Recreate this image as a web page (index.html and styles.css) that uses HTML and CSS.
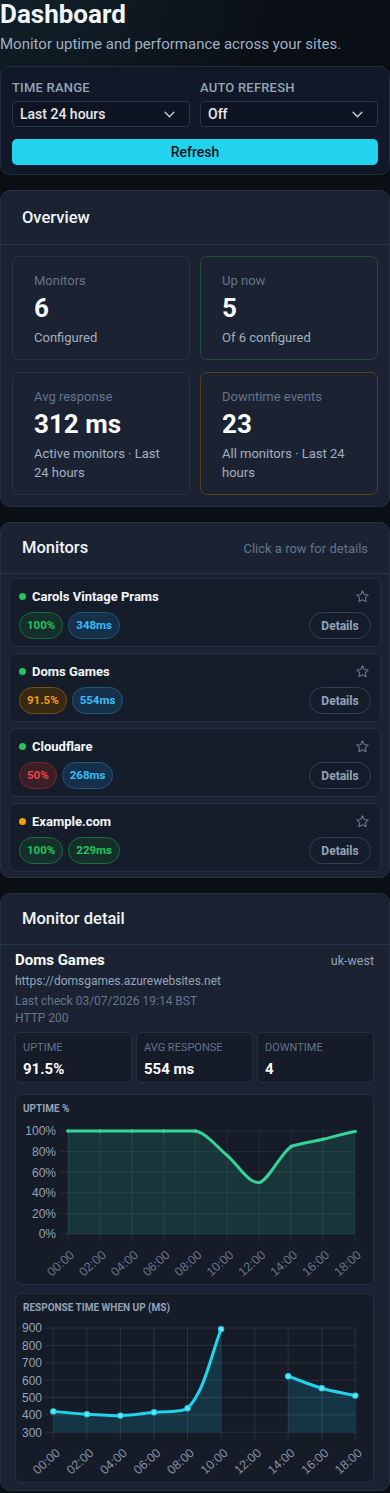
FILE: index.html
```html
<!DOCTYPE html>
<html lang="en">
<head>
<meta charset="utf-8">
<title>Dashboard</title>
<link rel="stylesheet" href="styles.css">
</head>
<body>
<main class="page">
  <header class="page-head">
    <h1 class="title">Dashboard</h1>
    <p class="subtitle">Monitor uptime and performance across your sites.</p>
  </header>

  <section class="controls">
    <div class="control-grid">
      <div class="field">
        <span class="field-label">Time range</span>
        <div class="select"><span>Last 24 hours</span><svg class="chev" viewBox="0 0 12 8" width="11" height="7"><path d="M1 1.5l5 5 5-5" fill="none" stroke="#cbd5e1" stroke-width="1.5" stroke-linecap="round" stroke-linejoin="round"/></svg></div>
      </div>
      <div class="field">
        <span class="field-label">Auto refresh</span>
        <div class="select"><span>Off</span><svg class="chev" viewBox="0 0 12 8" width="11" height="7"><path d="M1 1.5l5 5 5-5" fill="none" stroke="#cbd5e1" stroke-width="1.5" stroke-linecap="round" stroke-linejoin="round"/></svg></div>
      </div>
    </div>
    <button class="refresh" type="button">Refresh</button>
  </section>

  <section class="card">
    <div class="card-head card-head--tall"><h2 class="card-title">Overview</h2></div>
    <div class="stats">
      <div class="stat">
        <div class="stat-label">Monitors</div>
        <div class="stat-value">6</div>
        <div class="stat-sub">Configured</div>
      </div>
      <div class="stat stat--up">
        <div class="stat-label">Up now</div>
        <div class="stat-value">5</div>
        <div class="stat-sub">Of 6 configured</div>
      </div>
      <div class="stat">
        <div class="stat-label">Avg response</div>
        <div class="stat-value">312 ms</div>
        <div class="stat-sub">Active monitors · Last 24 hours</div>
      </div>
      <div class="stat stat--warn">
        <div class="stat-label">Downtime events</div>
        <div class="stat-value">23</div>
        <div class="stat-sub">All monitors · Last 24 hours</div>
      </div>
    </div>
  </section>

  <section class="card">
    <div class="card-head">
      <h2 class="card-title">Monitors</h2>
      <span class="card-hint">Click a row for details</span>
    </div>
    <div class="rows">
      <div class="row">
        <div class="row-top">
          <span class="dot dot--up"></span>
          <span class="row-name">Carols Vintage Prams</span>
          <svg class="star" viewBox="0 0 24 24" width="15" height="15"><path d="M12 2.8l2.8 5.9 6.4.8-4.7 4.4 1.2 6.4L12 17.2l-5.7 3.1 1.2-6.4-4.7-4.4 6.4-.8z" fill="none" stroke="#64748b" stroke-width="1.8" stroke-linejoin="round"/></svg>
        </div>
        <div class="row-bottom">
          <span class="pill pill--green">100%</span>
          <span class="pill pill--blue">348ms</span>
          <button class="details" type="button">Details</button>
        </div>
      </div>
      <div class="row">
        <div class="row-top">
          <span class="dot dot--up"></span>
          <span class="row-name">Doms Games</span>
          <svg class="star" viewBox="0 0 24 24" width="15" height="15"><path d="M12 2.8l2.8 5.9 6.4.8-4.7 4.4 1.2 6.4L12 17.2l-5.7 3.1 1.2-6.4-4.7-4.4 6.4-.8z" fill="none" stroke="#64748b" stroke-width="1.8" stroke-linejoin="round"/></svg>
        </div>
        <div class="row-bottom">
          <span class="pill pill--orange">91.5%</span>
          <span class="pill pill--blue">554ms</span>
          <button class="details" type="button">Details</button>
        </div>
      </div>
      <div class="row">
        <div class="row-top">
          <span class="dot dot--up"></span>
          <span class="row-name">Cloudflare</span>
          <svg class="star" viewBox="0 0 24 24" width="15" height="15"><path d="M12 2.8l2.8 5.9 6.4.8-4.7 4.4 1.2 6.4L12 17.2l-5.7 3.1 1.2-6.4-4.7-4.4 6.4-.8z" fill="none" stroke="#64748b" stroke-width="1.8" stroke-linejoin="round"/></svg>
        </div>
        <div class="row-bottom">
          <span class="pill pill--red">50%</span>
          <span class="pill pill--blue">268ms</span>
          <button class="details" type="button">Details</button>
        </div>
      </div>
      <div class="row">
        <div class="row-top">
          <span class="dot dot--warn"></span>
          <span class="row-name">Example.com</span>
          <svg class="star" viewBox="0 0 24 24" width="15" height="15"><path d="M12 2.8l2.8 5.9 6.4.8-4.7 4.4 1.2 6.4L12 17.2l-5.7 3.1 1.2-6.4-4.7-4.4 6.4-.8z" fill="none" stroke="#64748b" stroke-width="1.8" stroke-linejoin="round"/></svg>
        </div>
        <div class="row-bottom">
          <span class="pill pill--green">100%</span>
          <span class="pill pill--green">229ms</span>
          <button class="details" type="button">Details</button>
        </div>
      </div>
    </div>
  </section>

  <section class="card card--detail">
    <div class="card-head"><h2 class="card-title">Monitor detail</h2></div>
    <div class="detail">
      <div class="detail-top">
        <span class="detail-name">Doms Games</span>
        <span class="detail-region">uk-west</span>
      </div>
      <div class="detail-url">https://domsgames.azurewebsites.net</div>
      <div class="detail-meta">Last check 03/07/2026 19:14 BST<br>HTTP 200</div>
      <div class="mini-stats">
        <div class="mini"><div class="mini-label">Uptime</div><div class="mini-value">91.5%</div></div>
        <div class="mini"><div class="mini-label">Avg response</div><div class="mini-value">554 ms</div></div>
        <div class="mini"><div class="mini-label">Downtime</div><div class="mini-value">4</div></div>
      </div>

      <div class="chart chart--first">
        <div class="chart-title">Uptime %</div>
        <svg class="chart-svg" viewBox="0 0 357 166" width="357" height="166">
          <g class="grid">
            <line x1="44" y1="13" x2="339" y2="13"/>
            <line x1="44" y1="33.6" x2="339" y2="33.6"/>
            <line x1="44" y1="54.2" x2="339" y2="54.2"/>
            <line x1="44" y1="74.8" x2="339" y2="74.8"/>
            <line x1="44" y1="95.4" x2="339" y2="95.4"/>
            <line x1="44" y1="116" x2="339" y2="116"/>
            <line x1="52" y1="13" x2="52" y2="124"/>
            <line x1="83.9" y1="13" x2="83.9" y2="124"/>
            <line x1="115.8" y1="13" x2="115.8" y2="124"/>
            <line x1="147.7" y1="13" x2="147.7" y2="124"/>
            <line x1="179.6" y1="13" x2="179.6" y2="124"/>
            <line x1="211.4" y1="13" x2="211.4" y2="124"/>
            <line x1="243.3" y1="13" x2="243.3" y2="124"/>
            <line x1="275.2" y1="13" x2="275.2" y2="124"/>
            <line x1="307.1" y1="13" x2="307.1" y2="124"/>
            <line x1="339" y1="13" x2="339" y2="124"/>
          </g>
          <path class="area-green" d="M52,13 L179.6,13 C190,15 200,28 211.4,37.7 C223,48 233,66 243.3,64.5 C253,62 264,36 275.2,28.4 C286,25.2 296,23.8 307.1,21.2 C318,18.5 329,15.4 339,13.5 L339,116 L52,116 Z"/>
          <path class="line-green" d="M52,13 L179.6,13 C190,15 200,28 211.4,37.7 C223,48 233,66 243.3,64.5 C253,62 264,36 275.2,28.4 C286,25.2 296,23.8 307.1,21.2 C318,18.5 329,15.4 339,13.5"/>
          <g class="pts-green">
            <circle cx="52" cy="13" r="1.8"/><circle cx="83.9" cy="13" r="1.8"/><circle cx="115.8" cy="13" r="1.8"/><circle cx="147.7" cy="13" r="1.8"/><circle cx="179.6" cy="13" r="1.8"/><circle cx="211.4" cy="37.7" r="1.8"/><circle cx="243.3" cy="64.5" r="1.8"/><circle cx="275.2" cy="28.4" r="1.8"/><circle cx="307.1" cy="21.2" r="1.8"/><circle cx="339" cy="13.5" r="1.8"/>
          </g>
          <g class="ylab">
            <text x="40" y="17.3">100%</text>
            <text x="40" y="37.9">80%</text>
            <text x="40" y="58.5">60%</text>
            <text x="40" y="79.1">40%</text>
            <text x="40" y="99.7">20%</text>
            <text x="40" y="120.3">0%</text>
          </g>
          <g class="xlab xlab--dim">
            <text x="59" y="138" transform="rotate(-42 59 138)">00:00</text>
            <text x="90.9" y="138" transform="rotate(-42 90.9 138)">02:00</text>
            <text x="122.8" y="138" transform="rotate(-42 122.8 138)">04:00</text>
            <text x="154.7" y="138" transform="rotate(-42 154.7 138)">06:00</text>
            <text x="186.6" y="138" transform="rotate(-42 186.6 138)">08:00</text>
            <text x="218.4" y="138" transform="rotate(-42 218.4 138)">10:00</text>
            <text x="250.3" y="138" transform="rotate(-42 250.3 138)">12:00</text>
            <text x="282.2" y="138" transform="rotate(-42 282.2 138)">14:00</text>
            <text x="314.1" y="138" transform="rotate(-42 314.1 138)">16:00</text>
            <text x="346" y="138" transform="rotate(-42 346 138)">18:00</text>
          </g>
        </svg>
      </div>

      <div class="chart">
        <div class="chart-title">Response time when up (ms)</div>
        <svg class="chart-svg" viewBox="0 0 357 165" width="357" height="165">
          <g class="grid grid--strong">
            <line x1="29.3" y1="11" x2="339.3" y2="11"/>
            <line x1="29.3" y1="28.4" x2="339.3" y2="28.4"/>
            <line x1="29.3" y1="45.8" x2="339.3" y2="45.8"/>
            <line x1="29.3" y1="63.2" x2="339.3" y2="63.2"/>
            <line x1="29.3" y1="80.5" x2="339.3" y2="80.5"/>
            <line x1="29.3" y1="97.9" x2="339.3" y2="97.9"/>
            <line x1="29.3" y1="115.3" x2="339.3" y2="115.3"/>
            <line x1="37.3" y1="11" x2="37.3" y2="123.3"/>
            <line x1="70.9" y1="11" x2="70.9" y2="123.3"/>
            <line x1="104.4" y1="11" x2="104.4" y2="123.3"/>
            <line x1="138" y1="11" x2="138" y2="123.3"/>
            <line x1="171.5" y1="11" x2="171.5" y2="123.3"/>
            <line x1="205.1" y1="11" x2="205.1" y2="123.3"/>
            <line x1="238.7" y1="11" x2="238.7" y2="123.3"/>
            <line x1="272.2" y1="11" x2="272.2" y2="123.3"/>
            <line x1="305.8" y1="11" x2="305.8" y2="123.3"/>
            <line x1="339.3" y1="11" x2="339.3" y2="123.3"/>
          </g>
          <path class="area-cyan" d="M37.3,94.4 C44,95 57.5,96.4 70.9,97.2 C84.3,98 91,99 104.4,98.6 C117.8,98.2 124.6,96.8 138,95.3 C151.4,93.8 165,96 171.5,91.3 C188,75 193,45 205.1,12.1 L205.1,115.3 L37.3,115.3 Z"/>
          <path class="area-cyan" d="M272.2,59.2 C285.6,64 292.4,67.3 305.8,71.2 C319.2,75.1 325.9,75.6 339.3,78.6 L339.3,115.3 L272.2,115.3 Z"/>
          <path class="line-cyan" d="M37.3,94.4 C44,95 57.5,96.4 70.9,97.2 C84.3,98 91,99 104.4,98.6 C117.8,98.2 124.6,96.8 138,95.3 C151.4,93.8 165,96 171.5,91.3 C188,75 193,45 205.1,12.1"/>
          <path class="line-cyan" d="M272.2,59.2 C285.6,64 292.4,67.3 305.8,71.2 C319.2,75.1 325.9,75.6 339.3,78.6"/>
          <g class="pts-cyan">
            <circle cx="37.3" cy="94.4" r="2.6"/><circle cx="70.9" cy="97.2" r="2.6"/><circle cx="104.4" cy="98.6" r="2.6"/><circle cx="138" cy="95.3" r="2.6"/><circle cx="171.5" cy="91.3" r="2.6"/><circle cx="205.1" cy="12.1" r="2.6"/><circle cx="272.2" cy="59.2" r="2.6"/><circle cx="305.8" cy="71.2" r="2.6"/><circle cx="339.3" cy="78.6" r="2.6"/>
          </g>
          <g class="ylab">
            <text x="26" y="15.3">900</text>
            <text x="26" y="32.7">800</text>
            <text x="26" y="50.1">700</text>
            <text x="26" y="67.5">600</text>
            <text x="26" y="84.8">500</text>
            <text x="26" y="102.2">400</text>
            <text x="26" y="119.6">300</text>
          </g>
          <g class="xlab">
            <text x="44.8" y="137" transform="rotate(-42 44.8 137)">00:00</text>
            <text x="78.4" y="137" transform="rotate(-42 78.4 137)">02:00</text>
            <text x="111.9" y="137" transform="rotate(-42 111.9 137)">04:00</text>
            <text x="145.5" y="137" transform="rotate(-42 145.5 137)">06:00</text>
            <text x="179" y="137" transform="rotate(-42 179 137)">08:00</text>
            <text x="212.6" y="137" transform="rotate(-42 212.6 137)">10:00</text>
            <text x="246.2" y="137" transform="rotate(-42 246.2 137)">12:00</text>
            <text x="279.7" y="137" transform="rotate(-42 279.7 137)">14:00</text>
            <text x="313.3" y="137" transform="rotate(-42 313.3 137)">16:00</text>
            <text x="346.8" y="137" transform="rotate(-42 346.8 137)">18:00</text>
          </g>
        </svg>
      </div>
    </div>
  </section>
</main>
</body>
</html>
```

FILE: styles.css
```css
* { box-sizing: border-box; }

html, body {
  margin: 0;
  padding: 0;
}

body {
  background-color: #0a0e15;
  background-image: radial-gradient(ellipse 420px 260px at 0 0, rgba(30, 70, 80, 0.35), rgba(10, 14, 21, 0) 70%);
  background-repeat: no-repeat;
  color: #e2e8f0;
  font-family: Roboto, "Noto Sans", "Liberation Sans", sans-serif;
  width: 390px;
}

.page {
  display: flex;
  flex-direction: column;
  padding-bottom: 3px;
}

.page-head { padding: 0; }

.title {
  margin: 0;
  font-size: 26px;
  line-height: 28px;
  font-weight: 700;
  color: #f1f5f9;
}

.subtitle {
  margin: 6px 0 0;
  font-size: 15px;
  line-height: 20px;
  color: #9fb0c6;
}

/* controls */
.controls {
  margin-top: 12px;
  background: #111827;
  border: 1px solid #222c3c;
  border-radius: 10px;
  padding: 11px 11px 9px;
}

.control-grid {
  display: grid;
  grid-template-columns: 1fr 1fr;
  column-gap: 10px;
}

.field { display: flex; flex-direction: column; }

.field-label {
  font-size: 13px;
  line-height: 20px;
  font-weight: 500;
  text-transform: uppercase;
  letter-spacing: 0.2px;
  color: #94a3b8;
  margin-bottom: 3px;
}

.select {
  height: 26px;
  display: flex;
  align-items: center;
  justify-content: space-between;
  padding: 0 14px 0 7px;
  background: #0e1421;
  border: 1px solid #2a3547;
  border-radius: 4px;
  font-size: 14px;
  font-weight: 500;
  color: #e5e7eb;
}

.chev { display: block; }

.refresh {
  display: block;
  width: 100%;
  margin-top: 12px;
  height: 26px;
  border: 0;
  border-radius: 5px;
  background: #22d3ee;
  color: #0b1220;
  font-family: inherit;
  font-size: 14px;
  font-weight: 500;
}

/* cards */
.card {
  margin-top: 15px;
  background: #1b2332;
  border: 1px solid #243044;
  border-radius: 10px;
  overflow: hidden;
}

.card-head {
  display: flex;
  align-items: center;
  justify-content: space-between;
  height: 51px;
  padding: 0 21px;
  border-bottom: 1px solid #2a3649;
}

.card-head--tall { height: 54px; }

.card-title {
  margin: 0;
  font-size: 16.5px;
  line-height: 22px;
  font-weight: 500;
  color: #f1f5f9;
}

.card-hint {
  font-size: 13px;
  color: #64748b;
}

/* overview stats */
.stats {
  display: grid;
  grid-template-columns: 1fr 1fr;
  gap: 12px 10px;
  padding: 11px;
}

.stat {
  border: 1px solid #273245;
  border-radius: 7px;
  padding: 15px 20px 12px 21px;
}

.stat--up { border-color: #1f4a3a; }
.stat--warn { border-color: #544020; }

.stat-label {
  font-size: 13px;
  line-height: 18px;
  color: #64748b;
}

.stat-value {
  font-size: 26px;
  line-height: 30px;
  font-weight: 700;
  color: #f8fafc;
  margin-top: 3px;
}

.stat-sub {
  font-size: 13px;
  line-height: 19px;
  color: #a3afbf;
  margin-top: 5px;
}

/* monitor rows */
.rows {
  display: flex;
  flex-direction: column;
  gap: 6px;
  padding: 4px 8px 5px;
}

.row {
  background: #161d2a;
  border: 1px solid #263042;
  border-radius: 7px;
  padding: 7px 9px;
}

.row-top {
  display: flex;
  align-items: center;
  height: 20px;
}

.dot {
  width: 7px;
  height: 7px;
  border-radius: 50%;
  margin-right: 6px;
  flex: none;
}

.dot--up { background: #22c55e; }
.dot--warn { background: #f59e0b; }

.row-name {
  font-size: 13px;
  font-weight: 700;
  color: #f1f5f9;
  flex: 1;
}

.star { margin-right: 1px; flex: none; }

.row-bottom {
  display: flex;
  align-items: center;
  gap: 5px;
  margin-top: 6px;
}

.pill {
  height: 27px;
  line-height: 25px;
  padding: 0 7px;
  border-radius: 14px;
  border: 1px solid;
  font-size: 11.5px;
  font-weight: 700;
}

.pill--green { background: #15302a; border-color: #1d6b3e; color: #22c55e; }
.pill--blue { background: #173049; border-color: #1f5878; color: #38bdf8; }
.pill--orange { background: #372914; border-color: #7a4f14; color: #f59e0b; }
.pill--red { background: #3a1f27; border-color: #7a2630; color: #ef4444; }

.details {
  margin-left: auto;
  height: 27px;
  width: 62px;
  padding: 0;
  background: transparent;
  border: 1px solid #334155;
  border-radius: 14px;
  color: #94a3b8;
  font-family: inherit;
  font-size: 12px;
  font-weight: 700;
}

/* detail */
.detail {
  padding: 5px 15px 7px 14px;
}

.detail-top {
  display: flex;
  justify-content: space-between;
  align-items: baseline;
  line-height: 20px;
}

.detail-name {
  font-size: 15px;
  font-weight: 700;
  color: #f8fafc;
}

.detail-region {
  font-size: 12.5px;
  color: #94a3b8;
}

.detail-url {
  font-size: 12px;
  line-height: 20px;
  color: #94a3b8;
}

.detail-meta {
  margin-top: 2px;
  font-size: 12px;
  line-height: 17px;
  color: #64748b;
}

.mini-stats {
  display: grid;
  grid-template-columns: repeat(3, 1fr);
  gap: 4px;
  margin-top: 5px;
}

.mini {
  background: #151b27;
  border: 1px solid #263042;
  border-radius: 5px;
  height: 51px;
  padding: 8px 7px 0;
}

.mini-label {
  font-size: 11px;
  line-height: 13px;
  text-transform: uppercase;
  color: #64748b;
}

.mini-value {
  margin-top: 6px;
  font-size: 15px;
  line-height: 18px;
  font-weight: 700;
  color: #f8fafc;
}

.chart {
  margin-top: 8px;
  background: #151b27;
  border: 1px solid #253043;
  border-radius: 6px;
  padding-top: 8px;
}

.chart--first { margin-top: 11px; }

.chart-title {
  font-size: 10px;
  line-height: 12px;
  font-weight: 700;
  text-transform: uppercase;
  color: #94a3b8;
  padding-left: 7px;
  margin-bottom: 3px;
}

.chart-svg { display: block; }

.grid line { stroke: rgba(148, 163, 184, 0.12); stroke-width: 1; }
.grid--strong line { stroke: rgba(148, 163, 184, 0.16); }

.area-green { fill: rgba(45, 212, 160, 0.15); }
.line-green { fill: none; stroke: #34d399; stroke-width: 3; stroke-linejoin: round; stroke-linecap: round; }
.pts-green circle { fill: #34d399; }

.area-cyan { fill: rgba(34, 211, 238, 0.15); }
.line-cyan { fill: none; stroke: #22d3ee; stroke-width: 3; stroke-linejoin: round; stroke-linecap: round; }
.pts-cyan circle { fill: #67e8f9; stroke: #22d3ee; stroke-width: 1.2; }

.ylab text {
  font-family: "Liberation Sans", Arial, sans-serif;
  font-size: 12px;
  fill: #94a3b8;
  text-anchor: end;
}

.xlab text {
  font-family: "Liberation Sans", Arial, sans-serif;
  font-size: 12.5px;
  fill: #8491a4;
  text-anchor: end;
}

.xlab--dim text { fill: #6b7586; }
```
